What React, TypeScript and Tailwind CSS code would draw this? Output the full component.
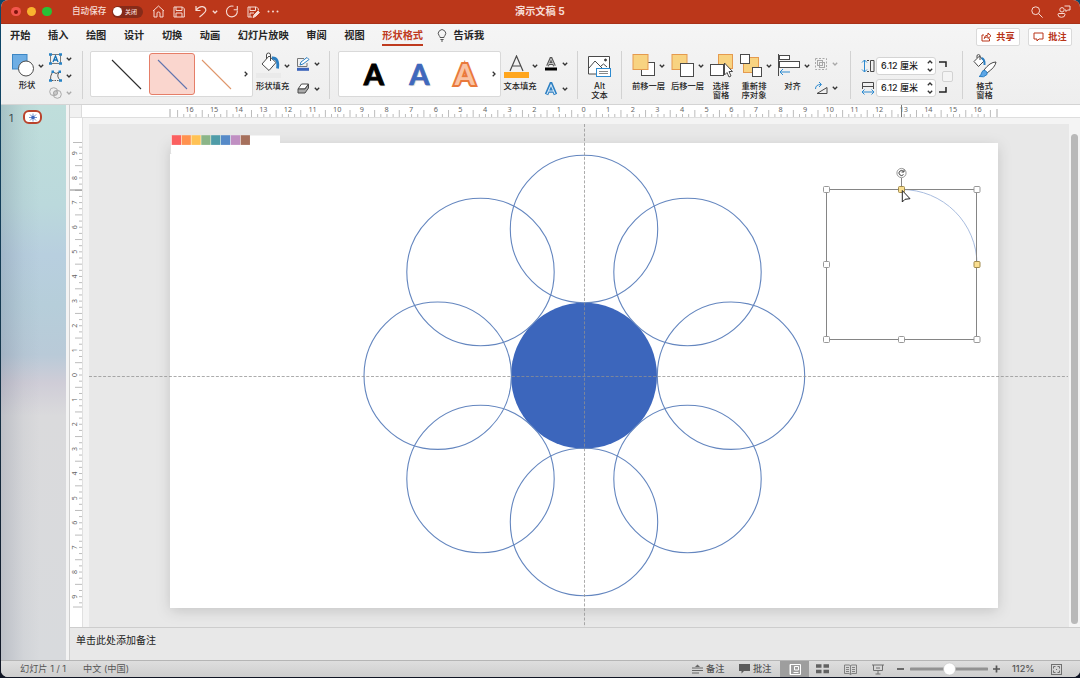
import type { ReactNode } from "react";

const UNIT = 24.63;

type IconProps = { w: number; h: number; className?: string; children: ReactNode };

function Icon({ w, h, className = "", children }: IconProps) {
    return (
        <svg width={w} height={h} viewBox={`0 0 ${w} ${h}`} fill="none" stroke="#4a4a4a" strokeWidth="1" className={`shrink-0 ${className}`}>
            {children}
        </svg>
    );
}

function Chevron({ className = "", color = "#333" }: { className?: string; color?: string }) {
    return (
        <svg width="6" height="4" viewBox="0 0 6 4" fill="none" stroke={color} strokeWidth="1.3" className={`shrink-0 ${className}`}>
            <path d="M.8.7 3 3 5.2.7" />
        </svg>
    );
}

function Divider({ className = "" }: { className?: string }) {
    return <div className={`w-px h-12 shrink-0 bg-[#d2d2d2] ${className}`} />;
}

function Label({ children, className = "" }: { children: ReactNode; className?: string }) {
    return <span className={`block text-center text-[8.3px] leading-[9.4px] font-medium whitespace-nowrap text-[#1f1f1f] ${className}`}>{children}</span>;
}

function TitleBar() {
    return (
        <header className="flex items-center h-6 shrink-0 bg-[#bb371a] text-[#f6dcd5] pl-[10px] pr-[9px] border-b border-[#a93218]">
            <div className="flex w-[61px] gap-[6px]">
                <span className="size-[9.5px] rounded-full bg-[#f2564d] flex items-center justify-center"><i className="size-1 rounded-full bg-[#7c130c]" /></span>
                <span className="size-[9.5px] rounded-full bg-[#f9b32f]" />
                <span className="size-[9.5px] rounded-full bg-[#28c136]" />
            </div>
            <span className="w-[40px] text-[8.6px] font-medium whitespace-nowrap">自动保存</span>
            <div className="flex items-center w-[31px] h-3 rounded-full bg-[#862b19] pl-px">
                <span className="size-[9px] rounded-full bg-white" />
                <span className="ml-[3px] text-[6px] font-medium whitespace-nowrap">关闭</span>
            </div>
            <Icon w={13} h={13} className="ml-[9px] stroke-[#f6dcd5]">
                <path d="M1 6 6.500 1 12 6M2 5.300V12H5V8Q5 7 6.500 7T8 8V12H11V5.300" />
            </Icon>
            <Icon w={12} h={12} className="ml-2 stroke-[#f6dcd5]">
                <path d="M1 1H9.500L11.300 2.800V11H1ZM3 1V4.500H9V1M3 11V7H9V11" />
            </Icon>
            <Icon w={12} h={13} className="ml-[10px] stroke-[#f6dcd5]" >
                <path d="M1 1V5.500H5.500M1.300 5Q4 1.300 7.500 1.700 11 2.500 10.800 5.500 10.500 7.300 4.500 12" strokeWidth="1.200" />
            </Icon>
            <Chevron color="#f6dcd5" className="ml-[5px]" />
            <Icon w={14} h={13} className="ml-[7px] stroke-[#f6dcd5]">
                <path d="M8.500 1.300A5.400 5.400 0 1 0 12.200 5.500M8.700 4.800H12.300V1" strokeWidth="1.100" />
            </Icon>
            <Icon w={13} h={12} className="ml-2 stroke-[#f6dcd5]">
                <path d="M5 11H1V1H9.500L11.300 2.800V4.500M3 1V4.500H8.500V1M3 11V7H7" />
                <path d="m6 11.500 1-2.500 4-4 1.500 1.500-4 4Z" fill="#f6dcd5" />
            </Icon>
            <Icon w={12} h={3} className="ml-[7px]">
                <g fill="#f6dcd5" stroke="none"><circle cx="1.5" cy="1.5" r="1" /><circle cx="6" cy="1.5" r="1" /><circle cx="10.500" cy="1.500" r="1" /></g>
            </Icon>
            <h1 className="ml-[236px] text-[10.2px] font-bold whitespace-nowrap">演示文稿 5</h1>
            <Icon w={12} h={12} className="ml-auto stroke-[#f6dcd5]">
                <circle cx="4.700" cy="4.700" r="3.900" /><path d="m7.600 7.600 4 4" />
            </Icon>
            <Icon w={14} h={13} className="ml-[14px] stroke-[#f6dcd5]">
                <circle cx="5" cy="4.800" r="2.200" />
                <path d="M1 9.500Q1 8.500 2 8.500H7Q8 8.500 8 9.500 8 12.300 4.500 12.300T1 9.500ZM7.500 1H13V5H10.500L9 6.500V5H7.800" />
            </Icon>
        </header>
    );
}

const tabs = ["开始", "插入", "绘图", "设计", "切换", "动画", "幻灯片放映", "审阅", "视图"];

function RibbonTabs() {
    return (
        <nav className="flex h-[27px] shrink-0 pl-[9px] pr-[8px] text-[10.2px] leading-[23px] font-bold text-[#262626] whitespace-nowrap">
            <div className="flex gap-[17.6px]">
                {tabs.map((t) => <span key={t}>{t}</span>)}
                <span className="h-[22px] border-b-2 border-[#bf3a1e] text-[#bf3a1e]">形状格式</span>
            </div>
            <Icon w={10} h={13} className="ml-[14px] mt-[5px] stroke-[#555]">
                <path d="M3 8.500Q3 7.600 2.200 6.800A3.700 3.700 0 1 1 7.800 6.800Q7 7.600 7 8.500ZM3.400 10.500H6.600M4 12H6" />
            </Icon>
            <span className="ml-[6.5px]">告诉我</span>
            <div className="ml-auto flex gap-2 mt-1 text-[9.2px] leading-4 text-[#b93519]">
                <span className="flex items-center justify-center gap-1 w-[44px] h-[18px] rounded-[2px] bg-white border border-[#dadada]">
                    <Icon w={11} h={10} className="stroke-[#b93519]"><path d="M3 3H1V9H8.500V6.500M3.200 6.500Q3.500 3 7 3V1L10 3.800 7 6.500V4.800Q4.500 4.800 3.200 6.500Z" /></Icon>共享
                </span>
                <span className="flex items-center justify-center gap-1 w-[44px] h-[18px] rounded-[2px] bg-white border border-[#dadada]">
                    <Icon w={11} h={10} className="stroke-[#b93519]"><path d="M1 1H10V7H6L4 9V7H1Z" /></Icon>批注
                </span>
            </div>
        </nav>
    );
}

function ShapesGroup() {
    return (
        <div className="flex w-[81px] shrink-0">
            <div className="w-[32px] pl-[10px]">
                <Icon w={24} h={26}>
                    <rect x="1.500" y="3.500" width="14.500" height="14.500" fill="#6eaee4" stroke="#3c86c4" />
                    <circle cx="15" cy="17.500" r="7.500" fill="#fff" />
                </Icon>
                <Label className="mt-[4px] w-8">形状</Label>
            </div>
            <Chevron className="ml-[5px] mt-[13px]" />
            <div className="flex flex-col gap-[4px] ml-[5px] pt-[2px]">
                <div className="flex items-center gap-[4px]">
                    <Icon w={13} h={12}>
                        <rect x="1.500" y="1.500" width="10" height="9" strokeWidth=".7" />
                        <path d="M0 1.500H3M10 1.500H13M0 10.500H3M10 10.500H13" stroke="#2682c5" strokeWidth="2.500" />
                        <path d="M4 9 6.500 3 9 9M5 7H8" stroke="#1773b7" strokeWidth="1.300" />
                    </Icon>
                    <Chevron />
                </div>
                <div className="flex items-center gap-[4px] mt-px">
                    <Icon w={13} h={12}>
                        <path d="M3.500 2Q1 6 1.500 10.500M4 2Q7 5 10.500 2 6.500 6 11.500 10.500" strokeWidth=".9" />
                        <path d="M3 10.500H10" strokeWidth=".9" strokeDasharray="1.500 1" />
                        <path d="M2.500 1.700H5M9.500 1.700H12M0 10.500H3M10 10.500H13" stroke="#2682c5" strokeWidth="2.500" />
                    </Icon>
                    <Chevron />
                </div>
                <div className="flex items-center gap-[4px] mt-px">
                    <Icon w={13} h={12} className="stroke-[#aaa]">
                        <circle cx="4.700" cy="4.700" r="4" /><circle cx="8.300" cy="7.300" r="4" />
                        <circle cx="6.500" cy="6" r="2" fill="#c9c9c9" />
                    </Icon>
                    <Chevron color="#aaa" />
                </div>
            </div>
        </div>
    );
}

function StyleLine({ color }: { color: string }) {
    return <Icon w={31} h={31}><path d="M1 1 30 30" stroke={color} strokeWidth="1.100" /></Icon>;
}

function LineGallery() {
    return (
        <div className="flex items-center w-[163px] h-[46px] ml-[7px] shrink-0 bg-white border border-[#d9d9d9] rounded-[2px]">
            <span className="flex justify-center w-[45px] ml-[13px]"><StyleLine color="#2b2b2b" /></span>
            <span className="flex items-center justify-center w-[46px] h-[42px] rounded-[3px] border border-[#e57e68] bg-[#fad6ce]"><StyleLine color="#6074ae" /></span>
            <span className="flex justify-center w-[45px] -ml-px"><StyleLine color="#df966b" /></span>
            <Chevron className="-rotate-90 ml-[4px]" />
        </div>
    );
}

function FillGroup() {
    return (
        <div className="flex ml-[3px] w-[72px] shrink-0">
            <div className="w-[33px]">
                <Icon w={22} h={20} className="ml-[4px] mt-[1px]">
                    <path d="M2 12 9 4 16 10.500 9 18.500ZM6.500 7V3Q6.500 1 8.500 1T10.500 3V9" fill="#fff" />
                    <path d="M12 6Q19 5.500 17.500 16.500" stroke="#2c7fc2" strokeWidth="2.800" />
                </Icon>
                <div className="h-[5px] w-[25px] mt-px bg-[#eaeaea]" />
                <Label className="mt-[4px]">形状填充</Label>
            </div>
            <Chevron className="-ml-[5px] mt-[13px]" />
            <div className="ml-[6px] pt-[6px]">
                <div className="flex items-center gap-1">
                    <Icon w={14} h={14}>
                        <path d="M8 1.500H1.500V9.500H11V6" stroke="#777" />
                        <path d="m4 8 1-3 6-4.500 2 2-6 4.500Z" stroke="#2c7fc2" fill="#fff" />
                        <path d="M1 12.300H13" stroke="#3c64bb" strokeWidth="3" />
                    </Icon>
                    <Chevron />
                </div>
                <div className="flex items-center gap-1 mt-[11px]">
                    <Icon w={14} h={13}>
                        <path d="M2 7 5.500 2H12.500L9 7Z" fill="#fff" /><path d="M2 7H9L12.500 2V6L9 11H2Z" fill="#aaa" />
                    </Icon>
                    <Chevron />
                </div>
            </div>
        </div>
    );
}

function WordArtGallery() {
    const glyph = "w-[45.5px] text-center";
    return (
        <div className="flex items-center w-[163px] h-[46px] ml-[8px] shrink-0 bg-white border border-[#d9d9d9] rounded-[2px] font-['Lato'] text-[29px] font-bold leading-[44px]">
            <span className={`${glyph} ml-[12px] text-black [-webkit-text-stroke:1px_black] [text-shadow:1px_1px_1px_#bbb]`}>A</span>
            <span className={`${glyph} text-[#3f68bd] [-webkit-text-stroke:.7px_#3f68bd] [text-shadow:1px_1px_1px_#ccc]`}>A</span>
            <span className={`${glyph} text-[#f9c3a4] [-webkit-text-stroke:4px_#e9793c] [paint-order:stroke_fill]`}>A</span>
            <Chevron className="-rotate-90 ml-[3px]" />
        </div>
    );
}

function TextFillGroup() {
    return (
        <div className="flex ml-[2px] w-[74px] shrink-0">
            <div className="w-[34px]">
                <Icon w={26} h={17} className="mt-[4px]"><path d="M7 16 13.500 1 20 16M9.300 11H17.700" strokeWidth="1.200" /></Icon>
                <div className="h-[6px] w-[25px] ml-px bg-[#ffa61e]" />
                <Label className="mt-[4px]">文本填充</Label>
            </div>
            <Chevron className="-ml-[5px] mt-[13px]" />
            <div className="ml-[6px] pt-[6px]">
                <div className="flex items-center gap-1">
                    <Icon w={14} h={14}>
                        <path d="M3.500 9 7 1 10.500 9M5 6.500H9" strokeWidth="2.800" stroke="#555" />
                        <path d="M3.500 9 7 1.500 10.500 9M5 6.500H9" strokeWidth=".8" stroke="#ddd" />
                        <path d="M1 12H13" stroke="#000" strokeWidth="3" />
                    </Icon>
                    <Chevron />
                </div>
                <div className="flex items-center gap-1 mt-[11px]">
                    <Icon w={14} h={14}>
                        <path d="M2.500 12.500 7 2 11.500 12.500M4.500 9H9.500" strokeWidth="3.600" stroke="#2c7fc2" />
                        <path d="M3 12 7 2.800 11 12M4.500 9H9.500" strokeWidth="1.100" stroke="#d5e8f8" />
                    </Icon>
                    <Chevron />
                </div>
            </div>
        </div>
    );
}

const gold = { fill: "#f8d381", stroke: "#e59a4e" };

function ArrangeTool({ label, chevron, className, children }: { label: ReactNode; chevron?: boolean; className: string; children: ReactNode }) {
    return (
        <div className={`shrink-0 ${className}`}>
            <div className="flex items-start">
                <Icon w={24} h={26} className="mt-[2px]">{children}</Icon>
                {chevron && <Chevron className="ml-[3px] mt-[13px]" />}
            </div>
            <Label className="mt-[2.5px]">{label}</Label>
        </div>
    );
}

function ArrangeGroup() {
    return (
        <div className="flex w-[228px] shrink-0 pl-[10px]">
            <ArrangeTool className="w-[39px]" chevron label={<span className="-ml-[6px]">前移一层</span>}>
                <rect x="9.500" y="9.500" width="13" height="13" fill="#fff" /><rect x="1" y="1.500" width="15" height="15" {...gold} />
            </ArrangeTool>
            <ArrangeTool className="w-[39px]" chevron label={<span className="-ml-[6px]">后移一层</span>}>
                <rect x="1" y="1.500" width="15" height="15" {...gold} /><rect x="9.500" y="10.500" width="13" height="13" fill="#fff" />
            </ArrangeTool>
            <ArrangeTool className="w-[29px]" label={<span className="block -ml-[7px]">选择<br />窗格</span>}>
                <rect x="8.500" y="1.500" width="14" height="14" {...gold} /><rect x=".500" y="11.500" width="13" height="11" fill="#fff" />
                <path d="M14.500 10V22L17 19.500 19 24 21 23 19 18.500H22.500Z" fill="#fff" />
            </ArrangeTool>
            <ArrangeTool className="w-[38px]" chevron label={<span className="block -ml-[8px]">重新排<br />序对象</span>}>
                <rect x="4.500" y="4.500" width="15" height="15" {...gold} /><rect x="1.500" y="1.500" width="9" height="9" fill="#fff" /><rect x="13.500" y="14.500" width="9" height="9" fill="#fff" />
            </ArrangeTool>
            <ArrangeTool className="w-[37px]" chevron label={<span className="-ml-[6px]">对齐</span>}>
                <path d="M1.500 1V23" /><rect x="2.500" y="2.500" width="10" height="4" fill="#fff" /><rect x="2.500" y="8.500" width="20" height="6" fill="#fff" />
                <path d="M13 19H3M6 16 3 19 6 22" stroke="#2c8ad0" />
            </ArrangeTool>
            <div className="pt-[6px]">
                <div className="flex items-center gap-1">
                    <Icon w={14} h={14} className="stroke-[#a8a8a8]">
                        <rect x="1.500" y="1.500" width="11" height="11" strokeDasharray="2 1.500" /><rect x="3.500" y="3.500" width="5" height="5" /><rect x="5.500" y="5.500" width="5" height="5" />
                    </Icon>
                    <Chevron color="#a8a8a8" />
                </div>
                <div className="flex items-center gap-1 mt-[10px]">
                    <Icon w={14} h={14}>
                        <path d="M3 12.500H13V6.500Z" /><path d="M1.500 8Q1.500 3.500 7 3.500M5 1 7.500 3.500 5 6" stroke="#2c8ad0" />
                    </Icon>
                    <Chevron />
                </div>
            </div>
        </div>
    );
}

function SizeField({ children }: { children: ReactNode }) {
    return (
        <div className="flex items-center">
            {children}
            <div className="flex items-center justify-between w-[60px] h-[18px] ml-px pl-[4px] pr-[2px] bg-white border border-[#d4d4d4] rounded-[3px] text-[9px] font-medium whitespace-nowrap">
                6.12 厘米
                <div className="flex flex-col gap-[4px]"><Chevron className="rotate-180" /><Chevron /></div>
            </div>
        </div>
    );
}

function SizeGroup() {
    return (
        <div className="flex w-[111px] shrink-0 pl-[10px] pt-[6px]">
            <div className="flex flex-col gap-[4px]">
                <SizeField>
                    <Icon w={14} h={14}><path d="M3.500 1V13M1 3.500 3.500 1 6 3.500M1 10.500 3.500 13 6 10.500" stroke="#2c8ad0" /><path d="M6 1.500H8M6 12.500H8M9.500 1.500H13V12.500H9.500Z" /></Icon>
                </SizeField>
                <SizeField>
                    <Icon w={14} h={14}><path d="M1 11H13M3.500 8.500 1 11 3.500 13.500M10.500 8.500 13 11 10.500 13.500" stroke="#2c8ad0" /><path d="M1.500 8V1.500H12.500V8M1.500 5.500H12.500" /></Icon>
                </SizeField>
            </div>
            <div className="ml-[3px] mt-[3px] w-3">
                <Icon w={9} h={8}><path d="M0 2H7V7" stroke="#222" strokeWidth="1.500" /></Icon>
                <div className="size-[11px] ml-[3px] mt-[3px] rounded-[2px] border border-[#d2d2d2] bg-[#f4f4f4]" />
                <Icon w={9} h={8} className="mt-[4px]"><path d="M0 6H7V1" stroke="#222" strokeWidth="1.500" /></Icon>
            </div>
        </div>
    );
}

function Toolbar() {
    return (
        <div className="flex h-[54px] shrink-0 text-[#1f1f1f]">
            <ShapesGroup />
            <Divider />
            <LineGallery />
            <FillGroup />
            <Divider className="ml-[1px]" />
            <WordArtGallery />
            <TextFillGroup />
            <Divider />
            <div className="w-[43px] shrink-0">
                <Icon w={26} h={26} className="ml-[9px] mt-[3px]">
                    <path d="M10 20H1.500V2.500H22.500V14" fill="#fff" /><path d="M2 14 8 7 15 14M14 12 16.500 10 20 13" /><circle cx="18.500" cy="6" r="1" fill="#222" />
                    <rect x="9.500" y="14.500" width="14" height="8" fill="#fff" stroke="#2c8ad0" /><path d="M12 17.500H21M12 19.500H21" stroke="#888" />
                </Icon>
                <Label className="mt-[1.5px]">Alt<br />文本</Label>
            </div>
            <Divider />
            <ArrangeGroup />
            <Divider />
            <SizeGroup />
            <Divider />
            <div className="w-[43px] shrink-0">
                <Icon w={26} h={26} className="ml-[9px] mt-[3px]">
                    <path d="M2 7.500 7.500 2 12 7 6.500 12.500ZM5 4V2Q5 .6 6.500 .6T8 2V6" fill="#fff" /><path d="M9.500 4Q13 5 12.500 11" stroke="#2c7fc2" strokeWidth="2" />
                    <path d="M12 16Q18 8 24 8 23.500 13 15 19Z" fill="#fff" /><path d="M7 22.500Q9 22 9.500 19 10.500 15.500 13 16.500 16 18 15 20.500 12 24 7 22.500Z" fill="#5ca6e6" stroke="#2c7fc2" />
                </Icon>
                <Label className="mt-[1.5px]">格式<br />窗格</Label>
            </div>
        </div>
    );
}

function Ticks({ half, vertical }: { half: number; vertical?: boolean }) {
    const count = Math.floor(half * 4);
    return (
        <>
            {Array.from({ length: count * 2 + 1 }, (_, i) => i - count).map((n) => {
                const at = (n * UNIT) / 4;
                const from = Math.abs(n) % 4 === 2 ? 5 : 9;
                return <path key={n} d={vertical ? `M${from} ${at}H12` : `M${at} ${from}V12`} stroke="#bcbcbc" />;
            })}
        </>
    );
}

function HorizontalRuler() {
    return (
        <div className="flex h-[13px] shrink-0 border-b border-[#dedede] bg-white">
            <div className="w-[12px] shrink-0 bg-[#f1f1f1] border-r border-[#dcdcdc]" />
            <svg width="998" height="12" viewBox="82 0 998 12" fontFamily="Noto Sans" fontSize="7.3" fill="#666" textAnchor="middle">
                <g transform="translate(584 0)">
                    <Ticks half={16.6} />
                    {Array.from({ length: 33 }, (_, i) => i - 16).map((n) => <text key={n} x={n * UNIT - 0.5} y="7">{Math.abs(n)}</text>)}
                    <path d="M-414 4V12M413 4V12" stroke="#aaa" />
                    <path d="M317.500 0V12" stroke="#777" />
                </g>
            </svg>
        </div>
    );
}

function VerticalRuler() {
    return (
        <svg width="12" height="509" viewBox="0 118 12 509" fontFamily="Noto Sans" fontSize="7" fill="#666" textAnchor="middle" className="shrink-0 bg-white">
            <g transform="translate(0 375)">
                <Ticks half={9.3} vertical />
                {Array.from({ length: 19 }, (_, i) => i - 9).map((n) => (
                    <text key={n} transform={`translate(6.600 ${n * UNIT}) rotate(-90)`}>{Math.abs(n)}</text>
                ))}
                <path d="M3 -232.500H12M3 232H12" stroke="#bcbcbc" />
                <path d="M0 -185H12" stroke="#888" />
            </g>
        </svg>
    );
}

const swatches = ["#fb6060", "#ff924f", "#ffc255", "#8bb588", "#4f9ca8", "#568ac8", "#c08fc2", "#a6705c"];
const petals = [[584, 229], [687.5, 272], [731, 375.7], [687.5, 479], [584, 522], [480.5, 479], [437.7, 375.7], [480.5, 272]];
const handles = [[826.5, 189.5], [977, 189.5], [826.5, 264.5], [826.5, 339.5], [901.5, 339.5], [977, 339.5]];
const adjusters = [[901.5, 189.5], [977, 264.5]];

function SlideCanvas() {
    return (
        <svg width="980" height="503" viewBox="89 124 980 503" fill="none" className="shrink-0 bg-[#e8e8e8]">
            <defs>
                <filter id="slideShadow" x="-5%" y="-8%" width="110%" height="118%">
                    <feDropShadow dx="0" dy="3" stdDeviation="7" floodColor="#000" floodOpacity=".15" />
                </filter>
            </defs>
            <rect x="170" y="143" width="828" height="465" fill="#fff" filter="url(#slideShadow)" />
            <path d="M170 143H171.500V154H170Z" fill="#e0e0e0" />
            <rect x="171" y="135.500" width="109" height="18" fill="#fff" />
            {swatches.map((c, i) => <rect key={c} x={171.7 + i * 9.85} y="135.200" width="9.300" height="9.700" fill={c} />)}
            <circle cx="584" cy="375.700" r="73" fill="#3c66bc" />
            <g stroke="#6486bf" strokeWidth="1.100">
                {petals.map(([x, y]) => <circle key={`${x}-${y}`} cx={x} cy={y} r="73.700" />)}
            </g>
            <path d="M584.500 124V627M89 376.500H1068" stroke="#909090" strokeWidth="1" strokeDasharray="3 1.700" opacity=".75" />
            <path d="M901.500 189.500A75.500 75 0 0 1 977 264.500" stroke="#a9bddf" />
            <path d="M826.500 189.500H976.500V339.500H826.500ZM901.500 178V189.500" stroke="#858585" />
            {handles.map(([x, y]) => <rect key={`${x}-${y}`} x={x - 3} y={y - 3} width="6" height="6" rx="1" fill="#fff" stroke="#999" />)}
            {adjusters.map(([x, y]) => <rect key={`${x}-${y}`} x={x - 3} y={y - 3} width="6" height="6" rx="1" fill="#fadf91" stroke="#a08a4e" />)}
            <circle cx="901.500" cy="173" r="4.600" fill="#fff" stroke="#999" />
            <path d="M903.500 171.500A2.500 2.500 0 1 0 903.500 174.500M901.500 172H904V169.500" stroke="#444" />
            <path d="M902.300 190.500V202L905 199.300 910 198.700Z" fill="#fff" stroke="#222" />
        </svg>
    );
}

function Sidebar() {
    return (
        <aside className="flex w-[65px] shrink-0 pl-[8px] pt-[5px] bg-[linear-gradient(90deg,rgba(60,70,100,.18),rgba(90,100,120,.05)_35%,transparent_60%),linear-gradient(180deg,#bfdedb,#bbd9dc_18%,#b8cfdf_27%,#b6ceda_36%,#b9cad8_45%,#cfcdd7_50%,#dadadc_56%,#d8dadd)]">
            <span className="w-[14px] text-[10.5px] leading-[18px] text-[#3c4b4e]">1</span>
            <div className="flex items-center justify-center w-[19px] h-[14px] rounded-[6px] border-[2.5px] border-[#b9432c] bg-white">
                <Icon w={10} h={9}>
                    <path d="M5 .5V8.500M1 4.500H9M2 1.500 8 7.500M8 1.500 2 7.500" stroke="#7691cf" strokeWidth="1" /><circle cx="5" cy="4.500" r="1.700" fill="#3c66bc" stroke="none" />
                </Icon>
            </div>
        </aside>
    );
}

function StatusBar() {
    return (
        <footer className="flex items-center h-[17px] shrink-0 pl-[19px] bg-linear-to-b from-[#dedede] to-[#cecece] border-t border-[#b5b5b5] text-[9.2px] text-[#555] whitespace-nowrap">
            <span className="w-[63px]">幻灯片 1 / 1</span>
            <span>中文 (中国)</span>
            <div className="ml-auto flex items-center w-[388px] h-full font-medium">
                <Icon w={11} h={10} className="stroke-[#666]"><path d="M0 4H11M0 6.500H11M0 9H7" /><path d="M3 3 5.500 .5 8 3Z" fill="#666" stroke="none" /></Icon>
                <span className="ml-[3px] w-[33px]">备注</span>
                <Icon w={11} h={10}><path d="M0 0H11V7H5L2.500 9.500V7H0Z" fill="#5c5c5c" stroke="none" /></Icon>
                <span className="ml-[3px] w-[27px]">批注</span>
                <span className="flex items-center justify-center w-[29px] h-full bg-[#9e9e9e]">
                    <Icon w={12} h={11} className="stroke-white"><path d="M1 .5H11.500V10.500H1ZM1.500 1V10M4.500 8.500H9.500M5.500 2.500H9.500V6H5.500Z" /></Icon>
                </span>
                <Icon w={13} h={10} className="ml-[7px]"><path d="M0 2H5.500M7.500 2H13M0 7.500H5.500M7.500 7.500H13" stroke="#626262" strokeWidth="3.500" /></Icon>
                <Icon w={13} h={11} className="ml-[15px] stroke-[#777]"><path d="M6.500 1.500V10.500L5 9.500H.5V1H5ZM6.500 1.500 8 1H12.500V9.500H8L6.500 10.500M2 3.500H5M2 5.500H5M2 7.500H5M8 3.500H11M8 5.500H11M8 7.500H11" strokeWidth=".9" /></Icon>
                <Icon w={13} h={11} className="ml-[15px] stroke-[#707070]"><path d="M0 1H12M1.500 1V6.500H10.500V1M6 6.500V10M3.500 10H8.500M4 4H8" /></Icon>
                <Icon w={7} h={8} className="ml-[12px]"><path d="M0 4H7" stroke="#555" strokeWidth="1.700" /></Icon>
                <Icon w={78} h={14} className="ml-[6px]"><path d="M1 7H77" stroke="#929292" strokeWidth="3" strokeLinecap="round" /><circle cx="39.500" cy="7" r="6" fill="#fff" stroke="#c0c0c0" strokeWidth=".5" /></Icon>
                <Icon w={7} h={8} className="ml-[5px]"><path d="M0 4H7M3.500 .5V7.500" stroke="#555" strokeWidth="1.700" /></Icon>
                <span className="ml-[12px] w-[39px]">112%</span>
                <Icon w={11} h={11} className="stroke-[#707070]"><rect x=".5" y=".5" width="10" height="10" /><path d="M2.500 4.500V2.500H4.500M6.500 2.500H8.500V4.500M8.500 6.500V8.500H6.500M4.500 8.500H2.500V6.500M5.500 5V6" /></Icon>
            </div>
        </footer>
    );
}

function App() {
    return (
        <div className="w-[1080px] h-[678px] overflow-hidden pl-px bg-linear-to-b from-[#0d486b] via-[#16384e] to-[#101524] font-['Inter','Noto_Sans_CJK_SC',sans-serif]">
            <div className="flex flex-col w-[1079px] h-[677px] overflow-hidden rounded-[7px] bg-[#e8e8e8]">
                <TitleBar />
                <div className="flex flex-col h-[81px] shrink-0 bg-linear-to-b from-[#f5f5f5] to-[#eeeeee] border-b border-[#d4d4d4]">
                    <RibbonTabs />
                    <Toolbar />
                </div>
                <div className="flex h-[555px] shrink-0">
                    <Sidebar />
                    <div className="w-[4px] shrink-0 bg-[#f3f3f3] border-r border-[#cfcfcf]" />
                    <main className="w-[1010px] shrink-0">
                        <HorizontalRuler />
                        <div className="flex h-[509px]">
                            <VerticalRuler />
                            <div className="flex w-[998px] pl-[6px] pt-[6px] bg-[#f4f4f4] border-l border-[#e0e0e0]">
                                <SlideCanvas />
                                <div className="w-[11px] -mt-[6px] pt-[16px] pl-[2px] bg-[#f4f4f4]">
                                    <div className="w-[7px] h-[490px] rounded-full bg-[#b9b9b9]" />
                                </div>
                            </div>
                        </div>
                        <div className="h-[33px] pl-[6px] border-t border-[#cdcdcd] text-[10px] leading-[24px] text-[#222]">单击此处添加备注</div>
                    </main>
                </div>
                <StatusBar />
            </div>
        </div>
    );
}

export default App;
